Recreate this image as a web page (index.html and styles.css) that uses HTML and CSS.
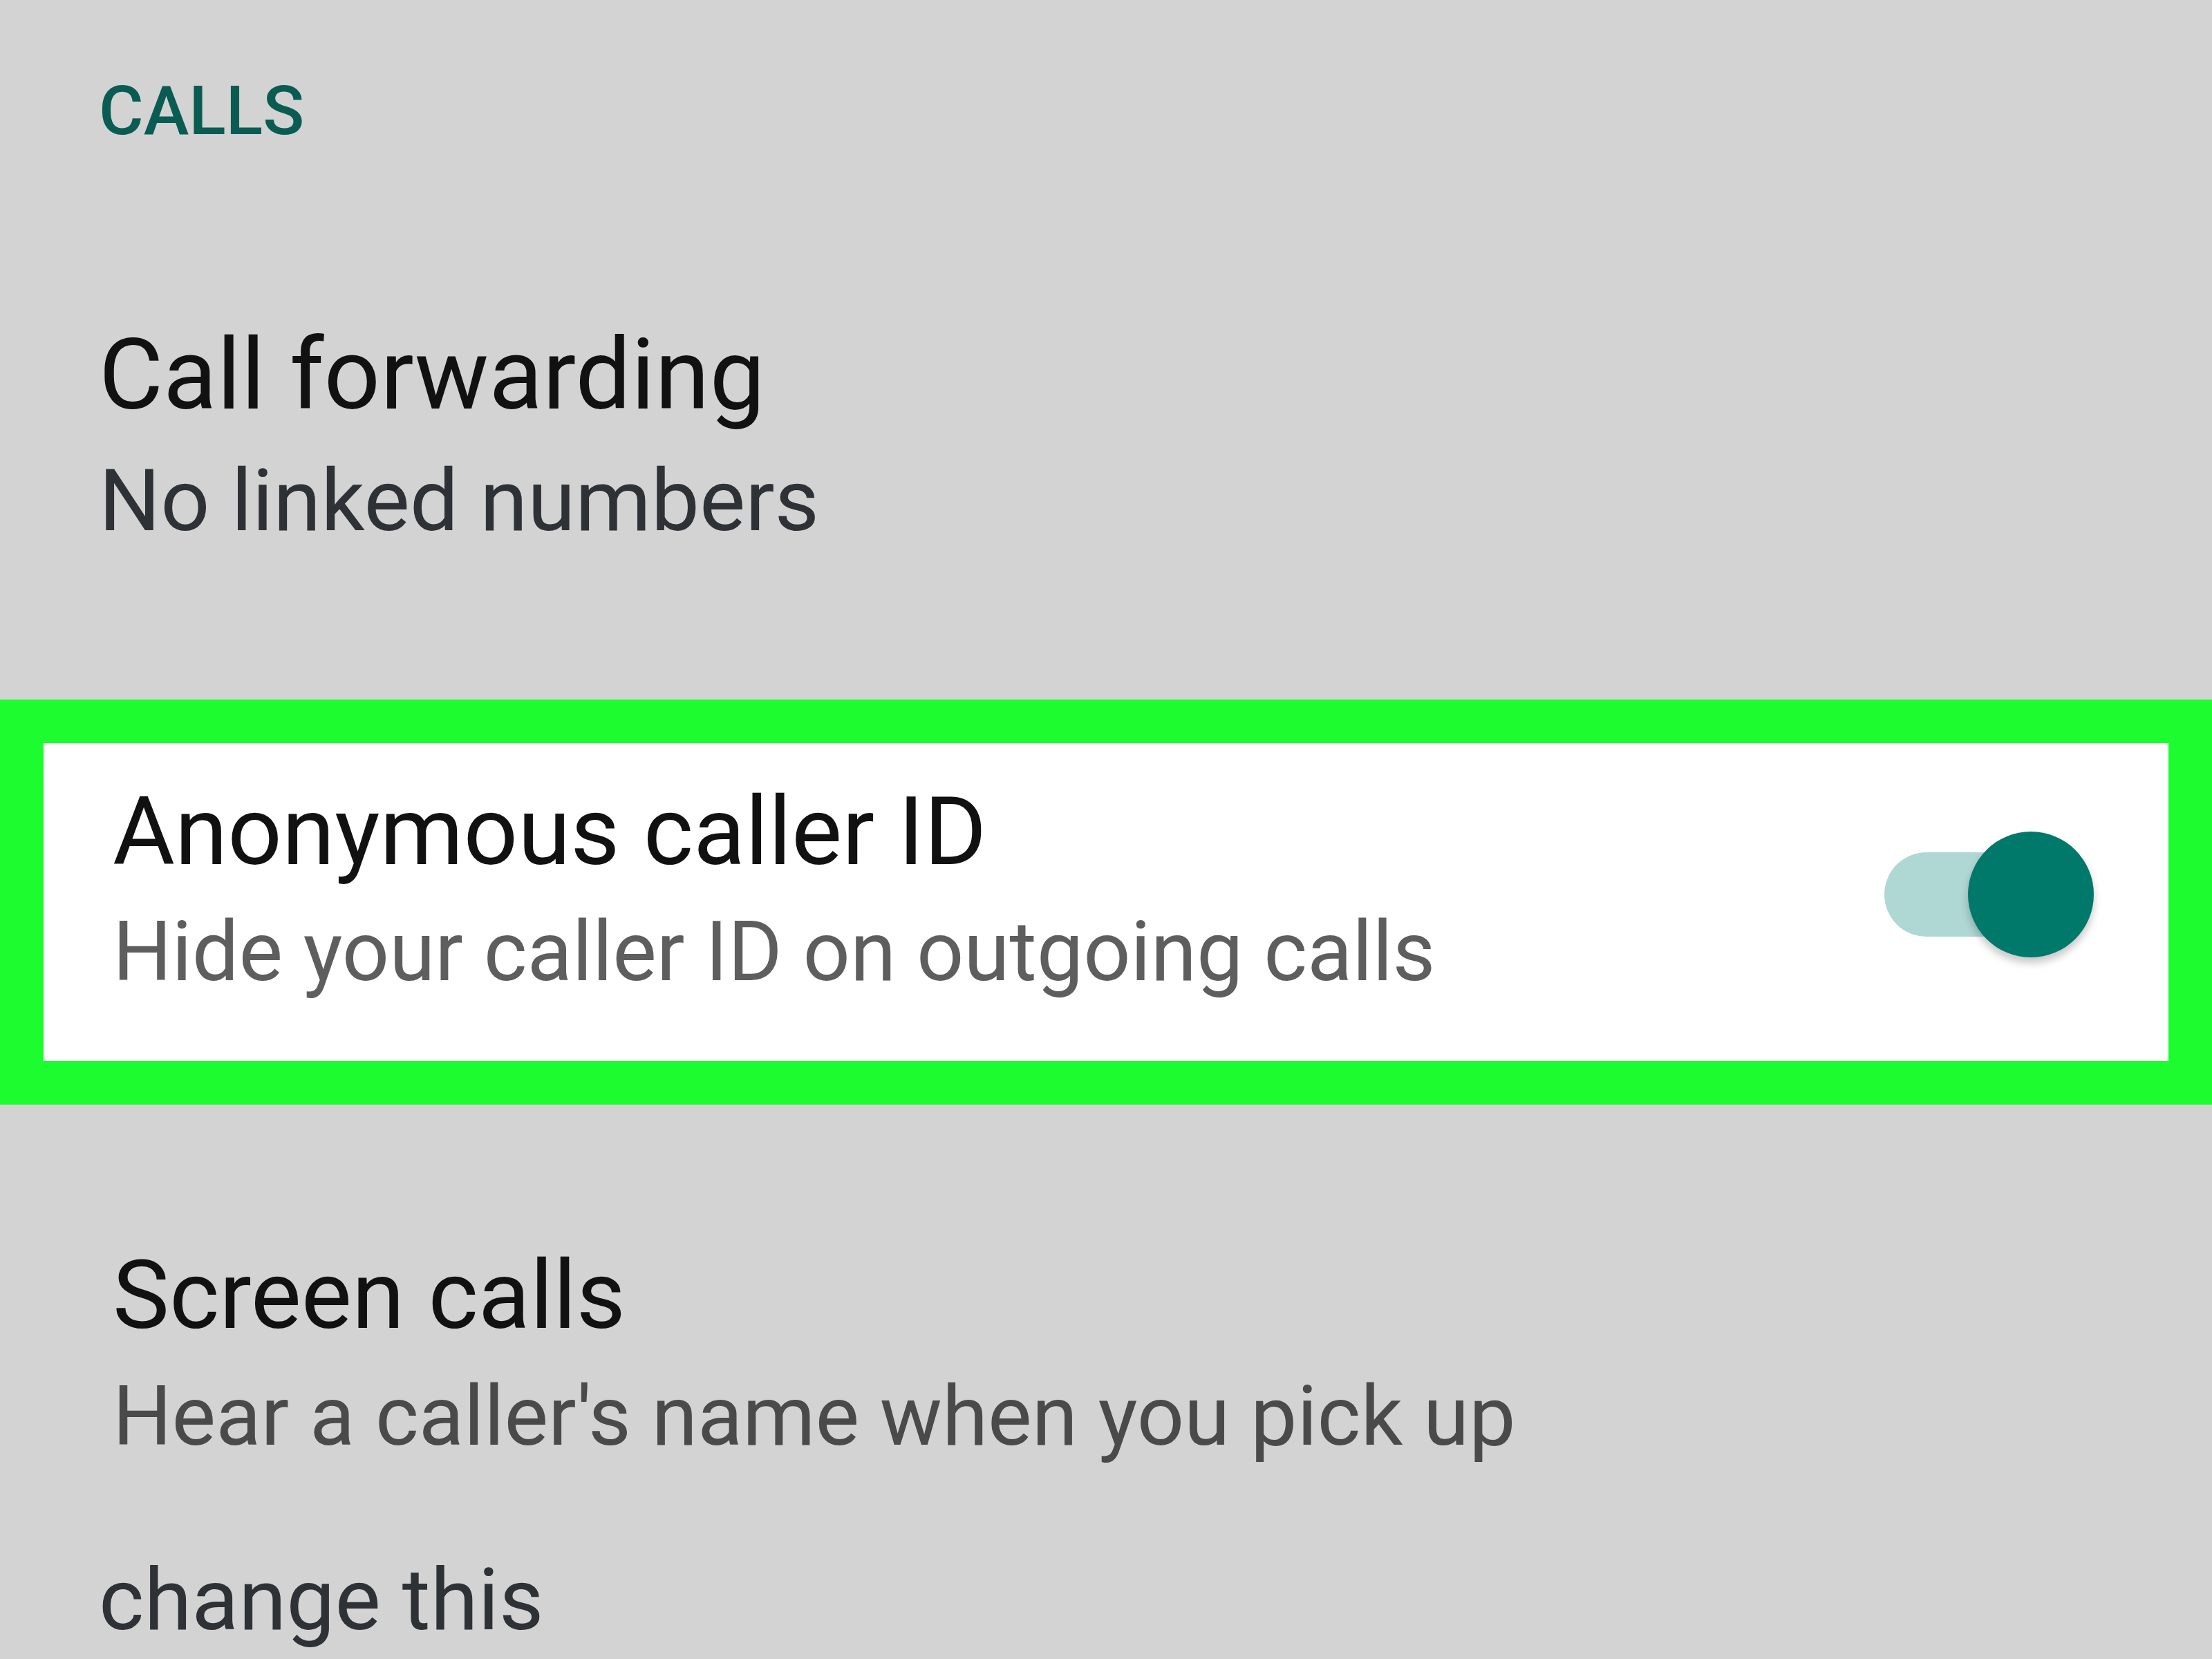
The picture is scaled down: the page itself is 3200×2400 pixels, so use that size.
FILE: index.html
```html
<!DOCTYPE html>
<html lang="en">
<head>
<meta charset="utf-8">
<title>Calls settings</title>
<link rel="stylesheet" href="styles.css">
</head>
<body>
<div class="page">
  <div class="section-header">CALLS</div>

  <div class="pref pref-plain">
    <div class="pref-title title-lg">Call forwarding</div>
    <div class="pref-summary summary-dark">No linked numbers</div>
  </div>

  <div class="highlight">
    <div class="pref-row">
      <div class="pref-text">
        <div class="pref-title title-md">Anonymous caller ID</div>
        <div class="pref-summary summary-grey">Hide your caller ID on outgoing calls</div>
      </div>
      <div class="switch" role="switch" aria-checked="true">
        <div class="switch-track"></div>
        <div class="switch-thumb"></div>
      </div>
    </div>
  </div>

  <div class="pref pref-indented">
    <div class="pref-title title-md">Screen calls</div>
    <div class="pref-summary summary-mid">Hear a caller's name when you pick up</div>
  </div>

  <div class="pref pref-plain footer-note">change this</div>
</div>
</body>
</html>
```

FILE: styles.css
```css
html, body {
  margin: 0;
  padding: 0;
  height: 2400px;
  overflow: hidden;
  background: #d3d3d3;
}

.page {
  font-family: Roboto, "Noto Sans", "Liberation Sans", sans-serif;
  display: flex;
  flex-direction: column;
  padding-top: 110px;
}

.section-header {
  padding-left: 143px;
  font-size: 99px;
  font-weight: 500;
  line-height: 100px;
  color: #0a5c52;
}

.pref-plain {
  padding-left: 143px;
}

.pref-indented {
  padding-left: 163px;
  margin-top: 196px;
}

.pref-title {
  color: #111111;
  white-space: nowrap;
}

.title-lg {
  font-size: 143px;
  line-height: 160px;
  margin-top: 252px;
}

.title-md {
  font-size: 138px;
  line-height: 160px;
}

.pref-summary {
  font-size: 120px;
  line-height: 140px;
  white-space: nowrap;
  margin-top: 25px;
}

.summary-dark {
  font-size: 125px;
  color: #2e3236;
  margin-top: 33px;
}

.summary-grey {
  color: #5e5e5e;
  margin-top: 24px;
}

.summary-mid {
  color: #4a4a4a;
}

.highlight {
  margin-top: 217px;
  border: 63px solid #1dfc2f;
  background: #ffffff;
}

.pref-row {
  display: flex;
  align-items: flex-start;
  justify-content: space-between;
  padding: 48px 108px 88px 100px;
}

.switch {
  position: relative;
  width: 303px;
  height: 182px;
  margin-top: 80px;
  flex-shrink: 0;
}

.switch-track {
  position: absolute;
  left: 0;
  top: 30px;
  width: 280px;
  height: 122px;
  border-radius: 61px;
  background: #afd7d4;
}

.switch-thumb {
  position: absolute;
  right: 0;
  top: 0;
  width: 182px;
  height: 182px;
  border-radius: 50%;
  background: #00786a;
  box-shadow: 0 8px 12px rgba(0, 0, 0, 0.22);
}

.footer-note {
  margin-top: 126px;
  font-size: 125px;
  line-height: 140px;
  color: #2e3236;
}
```
